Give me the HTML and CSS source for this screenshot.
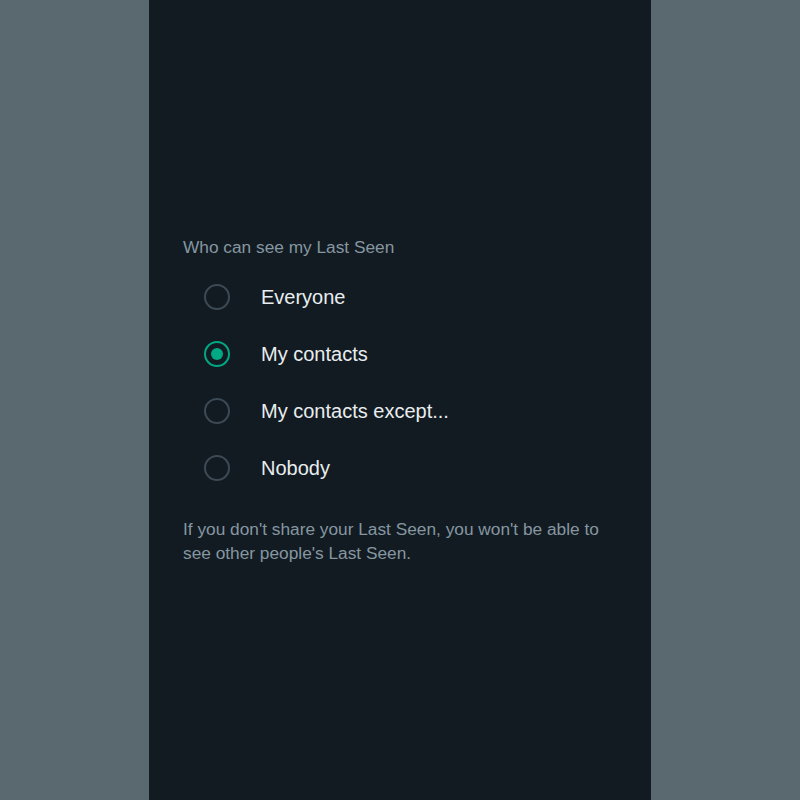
FILE: index.html
```html
<!DOCTYPE html>
<html lang="en">
<head>
  <meta charset="UTF-8">
  <meta name="viewport" content="width=device-width, initial-scale=1.0">
  <title>Last Seen</title>
  <link rel="stylesheet" href="styles.css">
</head>
<body>
  <div class="screen">
    <div class="section-title">Who can see my Last Seen</div>

    <div class="options">
      <label class="option">
        <span class="radio"></span>
        <span class="option-label">Everyone</span>
      </label>
      <label class="option">
        <span class="radio checked"></span>
        <span class="option-label">My contacts</span>
      </label>
      <label class="option">
        <span class="radio"></span>
        <span class="option-label">My contacts except...</span>
      </label>
      <label class="option">
        <span class="radio"></span>
        <span class="option-label">Nobody</span>
      </label>
    </div>

    <p class="note">If you don't share your Last Seen, you won't be able to see other people's Last Seen.</p>
  </div>
</body>
</html>
```

FILE: styles.css
```css
body {
  margin: 0;
  background: #5a6870;
  font-family: 'Liberation Sans', Arial, sans-serif;
}
.screen {
  width: 502px;
  min-height: 800px;
  margin: 0 auto;
  background: #121b22;
  padding: 235px 34px 0;
  box-sizing: border-box;
}
.section-title {
  font-size: 17.3px;
  line-height: 24px;
  color: #8696a0;
}
.options {
  margin-top: 9px;
  display: flex;
  flex-direction: column;
}
.option {
  display: flex;
  align-items: center;
  height: 57px;
  padding-left: 21px;
  gap: 31px;
}
.radio {
  width: 26px;
  height: 26px;
  box-sizing: border-box;
  border: 2px solid #3b4a54;
  border-radius: 50%;
  display: flex;
  align-items: center;
  justify-content: center;
}
.radio.checked {
  border-color: #00a884;
}
.radio.checked::after {
  content: '';
  width: 12px;
  height: 12px;
  border-radius: 50%;
  background: #00a884;
}
.option-label {
  font-size: 20px;
  color: #e9edef;
  padding-top: 1px;
}
.note {
  margin: 21px 0 0;
  font-size: 17.3px;
  line-height: 24px;
  color: #8696a0;
}
```
